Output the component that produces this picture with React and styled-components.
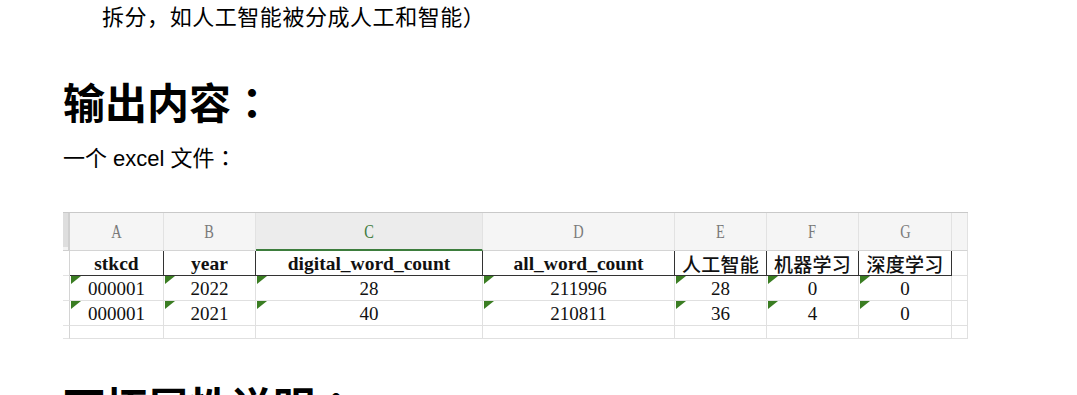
import React from "react";
import styled, { createGlobalStyle } from "styled-components";

const Global = createGlobalStyle`
  html, body { margin: 0; padding: 0; background: #fff; }
  body {
    font-family: "Liberation Sans", "Noto Sans CJK SC", sans-serif;
    color: #000;
  }
`;

const Page = styled.div`
  padding: 0 0 0 63px;
  width: 1077px;
  height: 395px;
  overflow: hidden;
  box-sizing: border-box;
`;

const Continuation = styled.p`
  margin: 0;
  padding-left: 39px;
  font-size: 22px;
  line-height: 36px;
  letter-spacing: 0.55px;
`;

const Heading = styled.h2`
  margin: ${(p) => p.$mt}px 0 0 0;
  font-size: 42px;
  line-height: 56px;
  font-weight: 700;
  white-space: nowrap;
`;

const Text = styled.p`
  margin: 8px 0 0 0;
  font-size: 22px;
  line-height: 30px;
`;

const Colon = styled.span`
  font-family: "Noto Sans CJK TC", sans-serif;
`;

const Sheet = styled.div`
  margin-top: 38px;
  display: grid;
  grid-template-columns: 7px 94px 92px 227px 192px 92px 92px 93px 16px;
  grid-template-rows: 38px 25px 25px 25px 13px;
  width: 905px;
  border-top: 1px solid #c9c9c9;
  box-sizing: border-box;
  font-family: "Liberation Serif", "Noto Sans CJK SC", serif;
`;

const Corner = styled.div`
  background: #f3f3f3;
  border-bottom: 1px solid #cfcfcf;
  border-right: 2px solid #d0d0d0;
  box-sizing: border-box;
  &::before {
    content: "";
    display: block;
    width: 5px;
    height: 34px;
    background: #dedede;
  }
`;

const ColHead = styled.div`
  background: ${(p) => (p.$active ? "#ececec" : "#f5f5f5")};
  border-right: 1px solid #e2e2e2;
  border-bottom: ${(p) => (p.$active ? "2px solid #3d7d3d" : "1px solid #d4d4d4")};
  box-sizing: border-box;
  display: flex;
  align-items: center;
  justify-content: center;
  padding-top: 2px;
`;

const Letter = styled.span`
  font-size: 18px;
  color: ${(p) => (p.$active ? "#3b7a3b" : "#7a7a7a")};
  display: inline-block;
  transform: scaleX(0.8);
`;

const RowHead = styled.div`
  border-right: 1px solid #d4d4d4;
  border-bottom: 1px solid #e3e3e3;
  box-sizing: border-box;
  background: #fff;
`;

const Cell = styled.div`
  position: relative;
  box-sizing: border-box;
  border-right: 1px solid ${(p) => (p.$strong ? "#333" : "#e0e0e0")};
  border-bottom: 1px solid ${(p) => (p.$strong ? "#333" : "#e0e0e0")};
  display: flex;
  align-items: center;
  justify-content: center;
  font-size: ${(p) => (p.$bold ? "19.5px" : "19px")};
  font-weight: ${(p) => (p.$bold ? 700 : 400)};
  line-height: 1;
  padding-top: 1px;
  white-space: nowrap;
  overflow: hidden;
  color: #111;
`;

const CjkHead = styled.span`
  font-family: "Noto Sans CJK SC", sans-serif;
  font-weight: 500;
  font-size: 19px;
  letter-spacing: 0.3px;
`;

const Flag = styled.span`
  position: absolute;
  left: 1px;
  top: 0;
  width: 0;
  height: 0;
  border-top: 8px solid #3a7d22;
  border-right: 10px solid transparent;
`;

const PlainCell = styled.div`
  box-sizing: border-box;
  border-right: 1px solid #e0e0e0;
  border-bottom: 1px solid #e0e0e0;
`;

const letters = ["A", "B", "C", "D", "E", "F", "G"];
const headers = [
  { t: "stkcd" },
  { t: "year" },
  { t: "digital_word_count" },
  { t: "all_word_count" },
  { t: "人工智能", cjk: true },
  { t: "机器学习", cjk: true },
  { t: "深度学习", cjk: true },
];
const rows = [
  ["000001", "2022", "28", "211996", "28", "0", "0"],
  ["000001", "2021", "40", "210811", "36", "4", "0"],
];

export default function App() {
  return (
    <Page>
      <Global />
      <Continuation>拆分，如人工智能被分成人工和智能）</Continuation>
      <Heading $mt={37}>
        输出内容<Colon>：</Colon>
      </Heading>
      <Text>
        一个 excel 文件<Colon>：</Colon>
      </Text>
      <Sheet>
        <Corner />
        {letters.map((l) => (
          <ColHead key={l} $active={l === "C"}>
            <Letter $active={l === "C"}>{l}</Letter>
          </ColHead>
        ))}
        <ColHead />

        <RowHead />
        {headers.map((h) => (
          <Cell key={h.t} $strong $bold={!h.cjk}>
            {h.cjk ? <CjkHead>{h.t}</CjkHead> : h.t}
          </Cell>
        ))}
        <PlainCell />

        {rows.map((r, i) => (
          <React.Fragment key={i}>
            <RowHead />
            {r.map((v, j) => (
              <Cell key={j}>
                <Flag />
                {v}
              </Cell>
            ))}
            <PlainCell />
          </React.Fragment>
        ))}

        <RowHead />
        {letters.map((l) => (
          <PlainCell key={l} />
        ))}
        <PlainCell />
      </Sheet>
      <Heading $mt={38}>
        可拓展性说明<Colon>：</Colon>
      </Heading>
    </Page>
  );
}
